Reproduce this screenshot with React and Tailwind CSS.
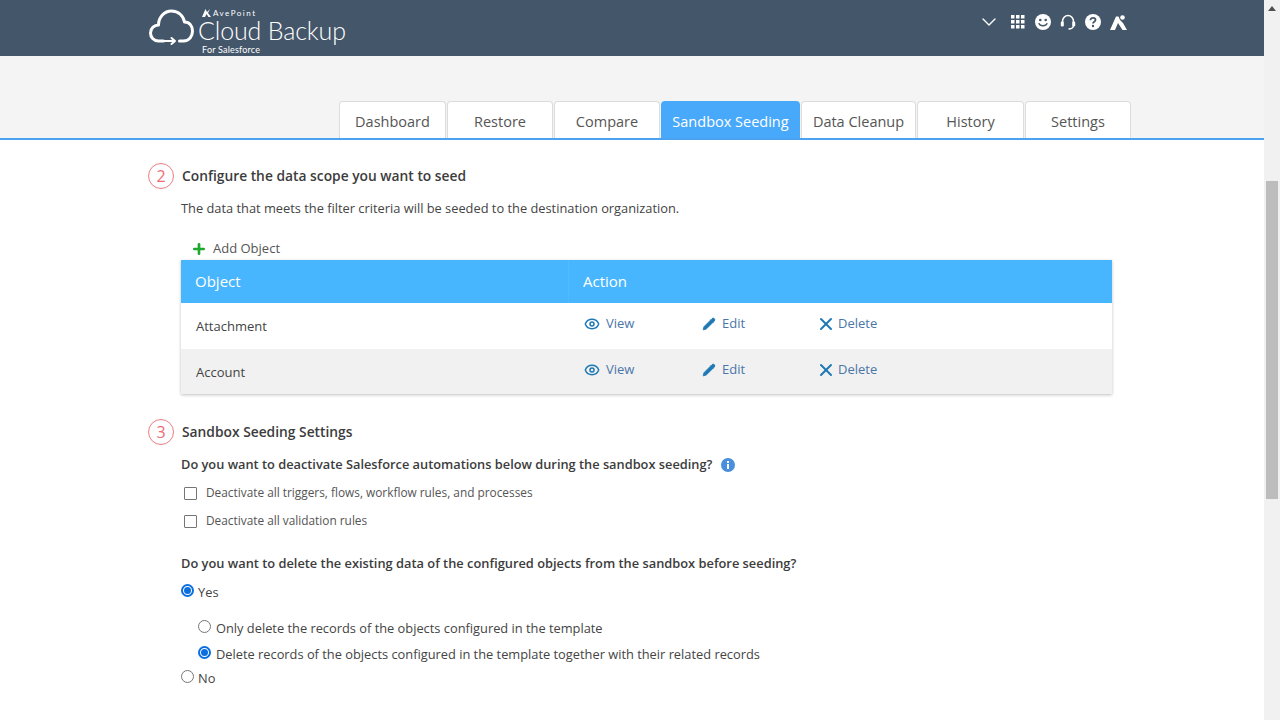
import React from 'react';
import { Eye, Pencil, X, Plus, ChevronDown } from 'lucide-react';

const TABS = [
  { name: 'Dashboard', width: 'w-[107px]' },
  { name: 'Restore', width: 'w-[106px]' },
  { name: 'Compare', width: 'w-[106px]' },
  { name: 'Sandbox Seeding', width: 'w-[139px]', active: true },
  { name: 'Data Cleanup', width: 'w-[115px]' },
  { name: 'History', width: 'w-[107px]' },
  { name: 'Settings', width: 'w-[106px]' },
];

const Logo = () => (
  <div className="flex items-start ml-[148px] pt-[7px]">
    <svg width="47" height="38" viewBox="0 0 46 38" fill="none" stroke="#fff" strokeWidth="3" strokeLinecap="round" strokeLinejoin="round" className="mt-[1px]">
      <path d="M15 33H10C5 33 2 29 2 25C2 20 6 17 10 17C10 9 16 3 23 3C30 3 35 8 36 14C41 14 44 18 44 23C44 28 41 33 35 33H31" />
      <path d="M15 33H26M23 30L26.500 33L23 36" strokeWidth="2" />
    </svg>
    <div className="ml-[3px] text-white leading-none">
      <div className="flex items-center h-[11px] text-[8px] tracking-[1.5px] font-['Lato',sans-serif] pl-[4px]">
        <svg width="9" height="8" viewBox="0 0 9 8" className="mr-[2px]" fill="#fff">
          <path d="M0 8L3.500 0L5 3L8 0L6 4L9 8H6.500L4.500 5L3 8Z" />
        </svg>
        AvePoint
      </div>
      <div className="text-[25px] font-light font-['Lato',sans-serif] tracking-[-0.15px] h-[24px] leading-[26px] -mt-[1px]">Cloud Backup</div>
      <div className="text-[9px] tracking-[0.2px] font-['Lato',sans-serif] pl-[4px] mt-[4px]">For Salesforce</div>
    </div>
  </div>
);

const HeaderIcons = () => (
  <div className="flex items-center ml-auto mr-[137px] mt-[13px] h-[18px]">
    <ChevronDown size={24} color="#fff" strokeWidth={1.4} />
    <svg width="14" height="14" viewBox="0 0 14 14" fill="#fff" className="ml-[10px]">
      <rect x="0" y="0" width="3.500" height="3.500" /><rect x="5" y="0" width="3.500" height="3.500" /><rect x="10" y="0" width="3.500" height="3.500" />
      <rect x="0" y="5" width="3.500" height="3.500" /><rect x="5" y="5" width="3.500" height="3.500" /><rect x="10" y="5" width="3.500" height="3.500" />
      <rect x="0" y="10" width="3.500" height="3.500" /><rect x="5" y="10" width="3.500" height="3.500" /><rect x="10" y="10" width="3.500" height="3.500" />
    </svg>
    <svg width="16" height="16" viewBox="0 0 16 16" className="ml-[10px]">
      <circle cx="8" cy="8" r="8" fill="#fff" />
      <circle cx="5.300" cy="6" r="1.300" fill="#44566a" />
      <circle cx="10.700" cy="6" r="1.300" fill="#44566a" />
      <path d="M4 9.500C5 12.500 11 12.500 12 9.500" stroke="#44566a" strokeWidth="1.300" fill="none" strokeLinecap="round" />
    </svg>
    <svg width="16" height="16" viewBox="0 0 16 16" fill="none" className="ml-[9px]">
      <path d="M2.500 9V7.500C2.500 4 5 1.500 8 1.500C11 1.500 13.500 4 13.500 7.500V9" stroke="#fff" strokeWidth="1.600" />
      <rect x="0.800" y="7.500" width="3" height="5" rx="1.200" fill="#fff" />
      <rect x="12.200" y="7.500" width="3" height="5" rx="1.200" fill="#fff" />
      <path d="M13.500 12C13 14 11 15 8.500 15" stroke="#fff" strokeWidth="1.300" />
    </svg>
    <svg width="16" height="16" viewBox="0 0 16 16" className="ml-[9px]">
      <circle cx="8" cy="8" r="8" fill="#fff" />
      <path d="M5.500 6.200C5.500 4.700 6.700 3.800 8 3.800C9.400 3.800 10.500 4.700 10.500 6C10.500 7.700 8 7.800 8 9.600" stroke="#44566a" strokeWidth="1.800" fill="none" />
      <circle cx="8" cy="12" r="1.200" fill="#44566a" />
    </svg>
    <svg width="17" height="15" viewBox="0 0 17 15" fill="#fff" className="ml-[9px]">
      <circle cx="12.500" cy="2.500" r="2.300" />
      <path d="M0 15L6 1.500H8.500L10 5L13 8L17 15H12.500L8 8L5 15Z" />
    </svg>
  </div>
);

const StepTitle = ({ num, title }) => (
  <div className="flex items-center h-[26px]">
    <div className="w-[26px] h-[26px] rounded-full border border-[#ee7b84] flex items-center justify-center text-[16px] text-[#ee6b75]">{num}</div>
    <div className="ml-[8px] text-[13.800px] font-semibold text-[#3c3c3c]">{title}</div>
  </div>
);

const ActionLink = ({ icon, label, width }) => (
  <div className={`flex items-center text-[13px] text-[#4a76a8] ${width}`}>
    {icon}
    <span>{label}</span>
  </div>
);

const ObjectRow = ({ name, shaded }) => (
  <div className={`flex h-[45.5px] ${shaded ? 'bg-[#f1f1f1]' : 'bg-white'}`}>
    <div className="w-[388px] pl-[15px] pt-[14px] text-[13px] text-[#444]">{name}</div>
    <div className="flex pl-[15px] pt-[11px] h-fit">
      <ActionLink width="w-[118px]" label="View" icon={<Eye size={16} color="#1f78b4" strokeWidth={2.25} className="mr-[6px]" />} />
      <ActionLink width="w-[116px]" label="Edit" icon={<Pencil size={14} color="#1f78b4" fill="#1f78b4" strokeWidth={1.5} className="mr-[6px]" />} />
      <ActionLink width="w-[80px]" label="Delete" icon={<X size={20} color="#1f78b4" strokeWidth={2.4} className="-ml-[2px] mr-[2px]" />} />
    </div>
  </div>
);

const CheckRow = ({ label, className }) => (
  <div className={`flex items-center ${className}`}>
    <div className="w-[13px] h-[13px] border border-[#767676] rounded-[1px] bg-white ml-[3px]" />
    <span className="ml-[9px] text-[11.850px] text-[#555]">{label}</span>
  </div>
);

const Radio = ({ checked }) =>
  checked ? (
    <div className="w-[13px] h-[13px] rounded-full border-2 border-[#0b6fe0] bg-white flex items-center justify-center -translate-y-[3px]">
      <div className="w-[7px] h-[7px] rounded-full bg-[#0b6fe0]" />
    </div>
  ) : (
    <div className="w-[13px] h-[13px] rounded-full border border-[#767676] bg-white -translate-y-[3px]" />
  );

const RadioRow = ({ checked, label, className, gap }) => (
  <div className={`flex items-center h-[18px] text-[12.830px] text-[#444] ${className}`}>
    <Radio checked={checked} />
    <span className={gap}>{label}</span>
  </div>
);

const App = () => {
  return (
    <div className="flex w-[1280px] h-[720px] overflow-hidden bg-white font-['Open_Sans',sans-serif]">
      <div className="w-[1264px] shrink-0">
        <div className="flex h-14 bg-[#44566a]">
          <Logo />
          <HeaderIcons />
        </div>

        {/* Tabs */}
        <div className="h-[84px] bg-[#f4f4f4] border-b-2 border-[#4aa3f0] flex items-end gap-px pl-[339px] pt-[45px]">
          {TABS.map((tab) => (
            <div
              key={tab.name}
              className={`${tab.width} h-[37px] rounded-t-[4px] flex items-center justify-center text-[14.500px] pt-[4px] ${
                tab.active
                  ? 'bg-[#48a9fb] text-white'
                  : 'bg-white text-[#555] border border-b-0 border-[#dcdcdc]'
              }`}
            >
              {tab.name}
            </div>
          ))}
        </div>

        <div className="pl-[148px] pt-[23px]">
          <StepTitle num="2" title="Configure the data scope you want to seed" />
          <div className="ml-[33px] mt-[11px] text-[12.830px] leading-[17px] text-[#444]">
            The data that meets the filter criteria will be seeded to the destination organization.
          </div>
          <div className="ml-[43px] mt-[22px] h-[20px] flex items-center text-[13px] text-[#555]">
            <Plus size={16} color="#1fa82e" strokeWidth={4} />
            <span className="ml-[6px]">Add Object</span>
          </div>

          <div className="ml-[33px] mt-[1px] w-[931px] shadow-[0_1px_3px_rgba(0,0,0,0.25)]">
            <div className="flex h-[43px] bg-[#48b6ff] text-[15px] text-white items-center">
              <div className="w-[388px] h-full flex items-center pl-[14px] border-r border-[#54baff]">Object</div>
              <div className="pl-[14px]">Action</div>
            </div>
            <ObjectRow name="Attachment" />
            <ObjectRow name="Account" shaded />
          </div>

          <div className="mt-[25px]">
            <StepTitle num="3" title="Sandbox Seeding Settings" />
          </div>

          <div className="ml-[33px] mt-[11px] flex items-center text-[12.800px] font-semibold text-[#3c3c3c] h-[18px]">
            Do you want to deactivate Salesforce automations below during the sandbox seeding?
            <svg width="14" height="14" viewBox="0 0 14 14" className="ml-[9px]">
              <circle cx="7" cy="7" r="7" fill="#4a8fdc" />
              <rect x="6" y="6" width="2" height="5" fill="#fff" />
              <rect x="6" y="3" width="2" height="2" fill="#fff" />
            </svg>
          </div>
          <CheckRow className="ml-[33px] mt-[10px] h-[18px]" label="Deactivate all triggers, flows, workflow rules, and processes" />
          <CheckRow className="ml-[33px] mt-[10px] h-[18px]" label="Deactivate all validation rules" />

          <div className="ml-[33px] mt-[24px] text-[12.830px] font-semibold text-[#3c3c3c] leading-[18px]">
            Do you want to delete the existing data of the configured objects from the sandbox before seeding?
          </div>
          <RadioRow className="ml-[33px] mt-[12px]" gap="ml-[4px]" checked label="Yes" />
          <RadioRow className="ml-[50px] mt-[18px]" gap="ml-[5px]" label="Only delete the records of the objects configured in the template" />
          <RadioRow className="ml-[50px] mt-[8px]" gap="ml-[5px]" checked label="Delete records of the objects configured in the template together with their related records" />
          <RadioRow className="ml-[33px] mt-[6px]" gap="ml-[4px]" label="No" />
        </div>
      </div>

      {/* Scrollbar */}
      <div className="w-4 bg-[#f1f1f1] flex flex-col items-center relative">
        <div className="mt-[6px] w-0 h-0 border-x-[4px] border-x-transparent border-b-[5px] border-b-[#505050]" />
        <div className="mt-[170px] w-[12px] h-[318px] bg-[#bdbdbd]" />
      </div>
    </div>
  );
};

export default App;
